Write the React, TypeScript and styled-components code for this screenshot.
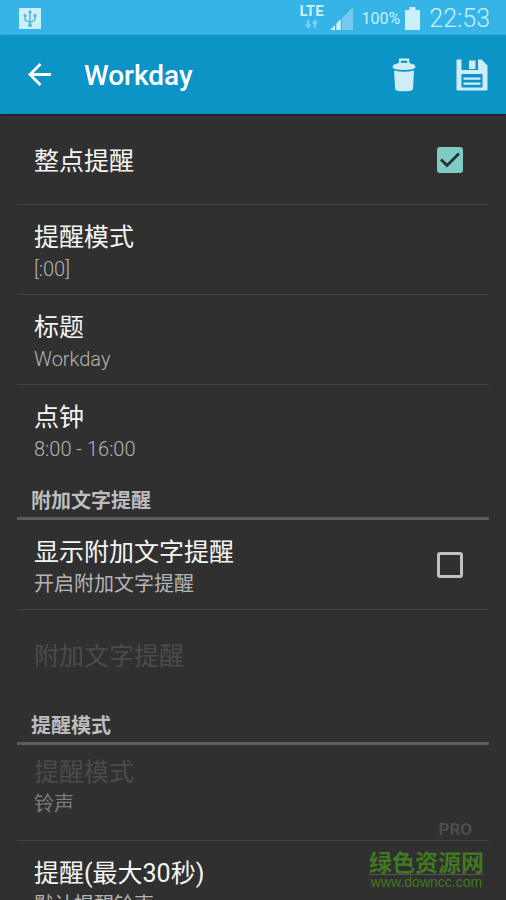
import React, { useState } from "react";
import styled, { createGlobalStyle } from "styled-components";

const GlobalStyle = createGlobalStyle`
  *, *::before, *::after { box-sizing: border-box; }
  body {
    margin: 0;
    background: #303030;
    font-family: Roboto, "Noto Sans CJK SC", sans-serif;
  }
  button { font: inherit; color: inherit; }
`;

const Screen = styled.div`
  position: relative;
  display: flex;
  flex-direction: column;
  height: 100vh;
  overflow: hidden;
  background: #303030;
`;

const StatusBar = styled.div`
  flex: none;
  display: flex;
  align-items: center;
  justify-content: space-between;
  height: 35px;
  padding: 2px 16px 0 19px;
  background: #34b4e7;
  color: #cdeffa;
`;

const StatusGroup = styled.div`
  display: flex;
  align-items: center;
`;

const Network = styled.div`
  display: flex;
  flex-direction: column;
  align-items: center;
  margin-right: 6px;
  padding-bottom: 4px;
  font-size: 15px;
  font-weight: 700;
  line-height: 15px;
`;

const BatteryLevel = styled.span`
  margin: 0 5px 0 9px;
  font-size: 16px;
  line-height: 24px;
`;

const Clock = styled.time`
  margin-left: 9px;
  font-size: 25px;
  font-weight: 300;
  line-height: 30px;
`;

const AppBar = styled.header`
  flex: none;
  display: flex;
  align-items: center;
  height: 79px;
  padding: 0 18px 0 24px;
  background: #0b94c5;
  color: #ffffff;
  box-shadow: 0 1px 2px rgba(0, 0, 0, 0.5);
  z-index: 1;
`;

const IconButton = styled.button`
  display: flex;
  padding: 0;
  border: 0;
  background: none;
  cursor: pointer;
`;

const PageTitle = styled.h1`
  flex: 1;
  margin: 0 0 0 28px;
  padding-top: 2px;
  font-size: 28px;
  font-weight: 500;
  line-height: 36px;
`;

const Actions = styled.div`
  display: flex;
  align-items: center;
  gap: 40px;
`;

const Preferences = styled.main`
  flex: 1;
  min-height: 0;
  padding: 1px 17px 0;
  overflow-y: auto;
  scrollbar-width: none;
`;

const SectionHeader = styled.h2`
  display: flex;
  align-items: flex-end;
  height: 45px;
  margin: 0;
  padding: 0 14px;
  border-bottom: 3px solid #5c5c5c;
  color: #bdbdbd;
  font-size: 20px;
  font-weight: 700;
  line-height: 32px;
`;

const PreferenceRow = styled.div<{ $divider?: boolean }>`
  display: flex;
  align-items: center;
  justify-content: space-between;
  width: 100%;
  min-height: 90px;
  padding: 0 26px 0 17px;
  border: 0;
  border-bottom: ${(p) => (p.$divider ? "1px solid #434343" : "0")};
  background: none;
  color: #f5f5f5;
  text-align: left;
`;

const ProRow = styled(PreferenceRow)`
  flex-direction: column;
  align-items: stretch;
  justify-content: flex-start;
  padding: 7px 17px 0;
`;

const Labels = styled.span`
  display: flex;
  flex-direction: column;
  padding-top: 4px;
`;

const Title = styled.span<{ $disabled?: boolean }>`
  color: ${(p) => (p.$disabled ? "#4b4b4b" : "#f5f5f5")};
  font-size: 25px;
  line-height: 34px;
`;

const Summary = styled.span<{ $disabled?: boolean; $light?: boolean }>`
  color: ${(p) => (p.$disabled ? "#7c7c7c" : "#b4b4b4")};
  font-size: 20px;
  font-weight: ${(p) => (p.$light ? 300 : 400)};
  line-height: 28px;
`;

const ProTag = styled.span`
  align-self: flex-end;
  color: #4d4d4d;
  font-size: 17px;
  font-weight: 700;
  line-height: 22px;
`;

const TickBox = styled.span`
  display: grid;
  width: 26px;
  height: 26px;
  > * { grid-area: 1 / 1; }
  > svg { pointer-events: none; }
`;

const TickInput = styled.input`
  appearance: none;
  width: 26px;
  height: 26px;
  margin: 0;
  border: 3px solid #c1c1c1;
  border-radius: 3px;
  &:checked {
    border-color: #80cbc4;
    background: #80cbc4;
  }
`;

const Watermark = styled.a`
  position: absolute;
  right: 22px;
  bottom: 11px;
  display: flex;
  flex-direction: column;
  align-items: center;
  color: #41791f;
  text-decoration: none;
`;

const WatermarkName = styled.span`
  padding-bottom: 1px;
  border-bottom: 1px solid #555555;
  font-family: "Noto Sans CJK SC", sans-serif;
  font-size: 23px;
  font-weight: 700;
  line-height: 24px;
`;

const WatermarkUrl = styled.span`
  font-family: "Liberation Sans", sans-serif;
  font-size: 14px;
  line-height: 14px;
`;

const UsbIcon = () => (
  <svg width="22" height="21" viewBox="0 0 22 21" aria-hidden="true">
    <rect width="22" height="21" fill="#cdeffa" />
    <g fill="none" stroke="#4fb5dc" strokeWidth="1.4">
      <path d="M11 4v13M6 8v3q0 2 5 3q5-1 5-3V8" />
    </g>
    <g fill="#4fb5dc">
      <path d="M11 1.500l2 3.500h-4z" />
      <circle cx="11" cy="17.2" r="1.900" />
      <circle cx="6" cy="7.6" r="1.5" />
      <rect x="14.6" y="6" width="2.800" height="3" />
    </g>
  </svg>
);

const DataArrows = () => (
  <svg width="13" height="10" viewBox="0 0 13 10" fill="#7fd0f0" aria-hidden="true">
    <path d="M2 0.800h2.200v4.800h2L3.100 10 0 5.600h2z" />
    <path d="M8.800 8.500h2.200V4.400h2L9.900 0 6.800 4.400h2z" />
  </svg>
);

const SignalIcon = () => (
  <svg width="23" height="23" viewBox="0 0 23 23" aria-hidden="true">
    <path d="M12 11.5L23 0v23H12z" fill="#74cbee" />
    <path d="M0 23l5-5v5zM6.3 16.700L10.800 12v11H6.300z" fill="#cdeffa" />
  </svg>
);

const BatteryIcon = () => (
  <svg width="15" height="23" viewBox="0 0 15 23" fill="#cdeffa" aria-hidden="true">
    <path d="M4.500 0h6v3H15v20H0V3h4.500z" />
  </svg>
);

const BackIcon = () => (
  <svg width="32" height="32" viewBox="0 0 32 32" fill="none" stroke="#fff" strokeWidth="2.800" aria-hidden="true">
    <path d="M27 15.500H6M16.500 5L6 15.500 16.500 26" />
  </svg>
);

const TrashIcon = () => (
  <svg width="24" height="34" viewBox="0 0 24 34" fill="#cfedf6" aria-hidden="true">
    <path fillRule="evenodd" d="M8 0.500h8.500q.8 0 .8.800V5Q23.500 6 23.500 9Q23 12 12 12T.5 9Q.5 6 6.900 5V1.300q0-.8 1.100-.8zM9 2.800v2.200q3-.3 6.200 0V2.800z" />
    <path d="M2 12.500Q12 15.200 22 12.500L21 31q-.2 2.300-9 2.300T3.200 31z" />
  </svg>
);

const SaveIcon = () => (
  <svg width="32" height="32" viewBox="0 0 32 32" aria-hidden="true">
    <path fill="#cfedf6" fillRule="evenodd" d="M1.500 .5H5.500V11H22V.5H25.500L31.500 6.500V30.500q0 1-1 1H1.500q-1 0-1-1V1.500q0-1 1-1zM5.500 15V28.500H26.500V15z" />
    <path fill="#cfedf6" d="M13 1.500h6.500V10H13zM7.500 18.500h17v2.200H7.500zM7.500 23.500h17v2.200H7.500z" />
  </svg>
);

const CheckMark = () => (
  <svg width="26" height="26" viewBox="0 0 26 26" fill="none" stroke="#263230" strokeWidth="2.800" aria-hidden="true">
    <path d="M4 12.500l6 6L22 6.500" />
  </svg>
);

type PreferenceProps = {
  title: string;
  summary?: string;
  light?: boolean;
  disabled?: boolean;
  divider?: boolean;
};

const Preference = ({ title, summary, light, disabled, divider = true }: PreferenceProps) => (
  <PreferenceRow as="button" type="button" disabled={disabled} $divider={divider}>
    <Labels>
      <Title $disabled={disabled}>{title}</Title>
      {summary && <Summary $disabled={disabled} $light={light}>{summary}</Summary>}
    </Labels>
  </PreferenceRow>
);

const CheckPreference = ({ title, summary, initial }: PreferenceProps & { initial: boolean }) => {
  const [checked, setChecked] = useState(initial);
  return (
    <PreferenceRow as="label" $divider>
      <Labels>
        <Title>{title}</Title>
        {summary && <Summary>{summary}</Summary>}
      </Labels>
      <TickBox>
        <TickInput type="checkbox" checked={checked} onChange={(e) => setChecked(e.target.checked)} />
        {checked && <CheckMark />}
      </TickBox>
    </PreferenceRow>
  );
};

export default function App() {
  return (
    <>
      <GlobalStyle />
      <Screen>
        <StatusBar>
          <UsbIcon />
          <StatusGroup>
            <Network>
              LTE
              <DataArrows />
            </Network>
            <SignalIcon />
            <BatteryLevel>100%</BatteryLevel>
            <BatteryIcon />
            <Clock>22:53</Clock>
          </StatusGroup>
        </StatusBar>
        <AppBar>
          <IconButton type="button" aria-label="返回"><BackIcon /></IconButton>
          <PageTitle>Workday</PageTitle>
          <Actions>
            <IconButton type="button" aria-label="删除"><TrashIcon /></IconButton>
            <IconButton type="button" aria-label="保存"><SaveIcon /></IconButton>
          </Actions>
        </AppBar>
        <Preferences>
          <CheckPreference title="整点提醒" initial />
          <Preference title="提醒模式" summary="[:00]" light />
          <Preference title="标题" summary="Workday" light />
          <Preference title="点钟" summary="8:00 - 16:00" light divider={false} />
          <SectionHeader>附加文字提醒</SectionHeader>
          <CheckPreference title="显示附加文字提醒" summary="开启附加文字提醒" initial={false} />
          <Preference title="附加文字提醒" disabled divider={false} />
          <SectionHeader>提醒模式</SectionHeader>
          <ProRow $divider>
            <Labels>
              <Title $disabled>提醒模式</Title>
              <Summary $disabled>铃声</Summary>
            </Labels>
            <ProTag>PRO</ProTag>
          </ProRow>
          <Preference title="提醒(最大30秒)" summary="默认提醒铃声" />
        </Preferences>
        <Watermark href="#top">
          <WatermarkName>绿色资源网</WatermarkName>
          <WatermarkUrl>www.downcc.com</WatermarkUrl>
        </Watermark>
      </Screen>
    </>
  );
}
